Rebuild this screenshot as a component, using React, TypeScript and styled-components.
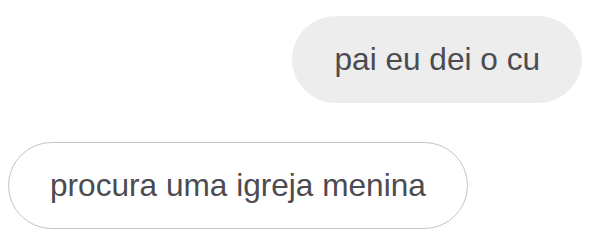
import React from "react";
import styled, { createGlobalStyle } from "styled-components";

const Global = createGlobalStyle`
  html, body { margin: 0; padding: 0; background: #ffffff; }
  body { font-family: "Liberation Sans", Arial, sans-serif; }
`;

const Thread = styled.div`
  display: flex;
  flex-direction: column;
  gap: 39px;
  padding: 16px 29px 0 8px;
`;

const Row = styled.div<{ $mine?: boolean }>`
  display: flex;
  justify-content: ${(p) => (p.$mine ? "flex-end" : "flex-start")};
`;

const Bubble = styled.div<{ $mine?: boolean }>`
  box-sizing: border-box;
  height: 87px;
  padding: 0 41px;
  border-radius: 44px;
  display: flex;
  align-items: center;
  font-size: 31.6px;
  color: #4b4b50;
  background: ${(p) => (p.$mine ? "#ededed" : "#ffffff")};
  border: 1px solid ${(p) => (p.$mine ? "#ededed" : "#c4c4c4")};
  white-space: nowrap;
`;

export default function App() {
  return (
    <>
      <Global />
      <Thread>
        <Row $mine>
          <Bubble $mine>pai eu dei o cu</Bubble>
        </Row>
        <Row>
          <Bubble>procura uma igreja menina</Bubble>
        </Row>
      </Thread>
    </>
  );
}
